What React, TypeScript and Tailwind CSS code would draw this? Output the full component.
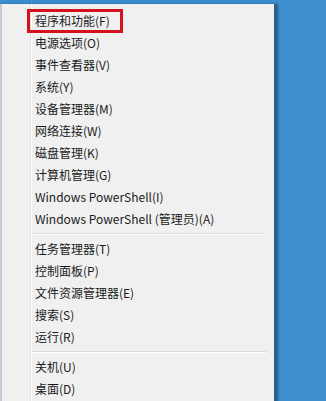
import React from "react";

type Entry = { label: string } | { sep: true };

const entries: Entry[] = [
  { label: "程序和功能(F)" },
  { label: "电源选项(O)" },
  { label: "事件查看器(V)" },
  { label: "系统(Y)" },
  { label: "设备管理器(M)" },
  { label: "网络连接(W)" },
  { label: "磁盘管理(K)" },
  { label: "计算机管理(G)" },
  { label: "Windows PowerShell(I)" },
  { label: "Windows PowerShell (管理员)(A)" },
  { sep: true },
  { label: "任务管理器(T)" },
  { label: "控制面板(P)" },
  { label: "文件资源管理器(E)" },
  { label: "搜索(S)" },
  { label: "运行(R)" },
  { sep: true },
  { label: "关机(U)" },
  { label: "桌面(D)" },
];

export default function App() {
  return (
    <div
      className="relative w-[326px] h-[401px] overflow-hidden bg-[#3d8ecf]"
      style={{ fontFamily: '"Noto Sans CJK SC", "Noto Sans", sans-serif' }}
    >
      <div className="pt-[4px] flex">
        <div className="flex w-[276px] h-[420px] bg-[#f0f0f0] border-l-2 border-[#c3ccd6] border-r-2 border-r-[#2f5f8a] shadow-[2px_0_2px_rgba(20,40,70,0.5)]">
          <div className="w-[29px] border-r border-[#e2e2e2]" />
          <div className="flex-1 border-l border-white pt-[6px] text-[12px] text-[#1b1b1b]">
            {entries.map((e, i) =>
              "sep" in e ? (
                <div key={i} className="h-[8px] flex items-center pr-[8px]">
                  <div className="w-full border-t border-[#d9d9d9] border-b border-b-white" />
                </div>
              ) : (
                <div key={i} className="h-[22px] flex items-center pl-[3px] leading-none whitespace-nowrap">
                  {e.label}
                </div>
              )
            )}
          </div>
        </div>
      </div>
      <div className="absolute left-[27px] top-[9px] w-[96px] h-[24px] border-[3px] border-[#d4121b]" />
    </div>
  );
}
